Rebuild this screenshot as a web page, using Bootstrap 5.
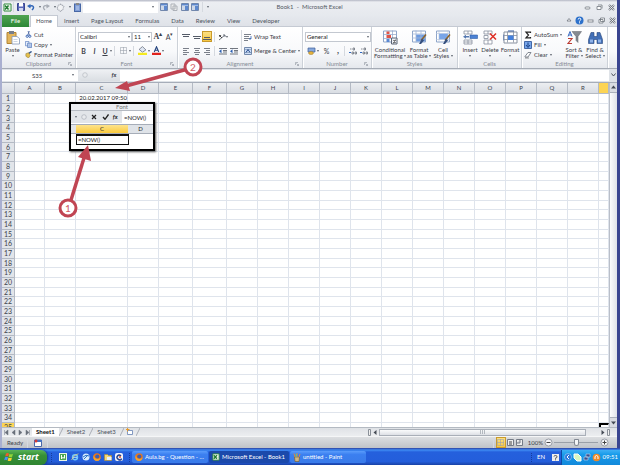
<!DOCTYPE html>
<html lang="en">
<head>
<meta charset="utf-8">
<meta name="viewport" content="width=device-width, initial-scale=1">
<title>Book1 - Microsoft Excel</title>
<link href="https://cdn.jsdelivr.net/npm/bootstrap@5.3.0/dist/css/bootstrap.min.css" rel="stylesheet">
<style>
body{font:6px/8px Lato,"Open Sans",sans-serif;color:#3c4048;background:#fff}
button,input,a{font:inherit;color:inherit}
button{background:none;border:0;padding:0}
a{text-decoration:none}
svg{display:block;flex:none}
.app{border-left:2px solid #a9afd0;border-right:3px solid #3a4590;min-height:0}
.titlebar{height:15px;background:linear-gradient(#b3b7c4 0,#eceef2 2px,#e6e9ee);padding-left:1px}
.titlebar button{height:11px}
.s3{width:3px}.s6{width:6px}.s8{width:8px}.s10{width:10px}.s11{width:11px}.s12{width:12px}.s15{width:15px}.s17{width:17px}.s20{width:20px}.s22{width:22px}.s26{width:26px}.s32{width:32px}.s40{width:40px}.s54{width:54px}
.t7{font-size:7px}.t8{font:8px "Liberation Serif",serif;font-weight:700}
.ib{display:flex;align-items:center;justify-content:center;flex:none;height:11px}
.title{color:#555b66}
.qbox{width:75px;height:10px;background:#fff}
.tabs{height:12px;background:linear-gradient(#e6e9ee,#dfe2e8);border-bottom:1px solid #c5cad3}
.rtab{height:12px;padding:2px 6px 0;color:#4c525c}
.rtab.file{width:27px;padding:2px 0 0;text-align:center;background:linear-gradient(#4fa352,#2c8736);color:#fff;margin-right:1px}
.rtab.on{background:#fff;border:1px solid #c5cad3;border-bottom:0;padding:1px 5px 0}
.ribbon{height:42px;background:linear-gradient(#fff,#f8f9fb 60%,#e5e8ed);border-bottom:1px solid #a5abb5}
.grp{border-right:1px solid #ccd1d8;display:flex;flex-direction:column;flex:none;box-shadow:1px 0 #fff}
.grp .body{height:34px;display:flex;padding:3px 0 0 2px}
.grp .cap{height:8px;color:#858b95;text-align:center;position:relative}
.grp .cap svg{position:absolute;right:3px;top:2px}
.g-clip{width:74px}.g-font{width:102px}.g-align{width:125px}.g-num{width:69px}.g-style{width:86px}.g-cells{width:64px}.g-edit{width:86px}
.line{display:flex;align-items:center;height:14px}
.vr1{width:1px;height:10px;background:#d5d9df;margin:0 2px;flex:none}
.tri{width:0;height:0;border:1px solid transparent;border-top:2px solid #5b616b;border-bottom:0;flex:none}
.big{display:flex;flex-direction:column;align-items:center;line-height:6px;white-space:nowrap;flex:none}
.big svg{margin-bottom:2px}
.big .tri{display:inline-block;margin:0 0 1px}
.big>.tri{margin-top:2px}
.sm{display:flex;align-items:center;gap:2px;height:10px;white-space:nowrap}
.fld{height:10px;border:1px solid #c3c8d0;background:#fff;padding:0 1px;display:flex;align-items:center;justify-content:space-between;color:#222}
.fld input{border:0;padding:0;width:100%;min-width:0;height:8px;background:none;outline:0}
.sel{background:linear-gradient(#fce38a,#f7c53c);outline:1px solid #c99a2c;outline-offset:-1px}
.fbar{height:14px;background:#dfe3e8;padding:1px 0 2px;border-bottom:1px solid #a6adb9}
.fbar input{border:0;background:#fff;height:11px;padding:0 2px;min-width:0;outline:0}
.namebox{width:76px;background:#fff;height:11px}
.fxarea{width:42px;background:linear-gradient(#eef0f3,#dadee3);border-radius:6px 0 0 6px;height:11px;padding:0 2px 0 4px}
.sheet{min-height:0;overflow:hidden}
.gridwrap{overflow:hidden;min-width:0}
.cells{table-layout:fixed;border-collapse:separate;border-spacing:0;width:607px;color:#222}
.cells th,.cells td{padding:0;line-height:8px;border-right:1px solid #dfe4ec;border-bottom:1px solid #dfe4ec;font-weight:400;white-space:nowrap}
.cells tr{height:10px}
.cells tbody tr:nth-child(3n){height:9px}
.cells th{background:#e2e5ea;border-color:#b4bac4;text-align:center;color:#3c424c}
.cells tbody th{font-size:7px}
.cells thead tr{height:11px}
.cells thead th{background:linear-gradient(#eceef1,#d9dde3)}
.cells thead th:last-child,.cells tbody tr:last-child th{background:#fcd454}
.cells td.val{text-align:right}
.cells td.cur{border-left:2px solid #000;border-top:2px solid #000}
.vs{width:8px;flex:none;background:#d9dce2;border-left:1px solid #b9bec8}
.vs .thumb{flex:1;margin:1px 0;background:linear-gradient(90deg,#fbfcfd,#dfe2e8);border:1px solid #a9afba;border-width:1px 0}
.sbtn{height:8px;width:100%;display:flex;align-items:center;justify-content:center}
.stabs{height:9px;flex:none;background:linear-gradient(#dfe2e6,#eceef0);border-top:1px solid #b4bac2;color:#4d535d}
.stab{height:8px;line-height:8px;padding:0 4px;white-space:nowrap}
.stab.on{background:#fff;color:#111;font-weight:700}
.hthumb{height:7px;background:linear-gradient(#fafbfc,#dde0e5);border:1px solid #a9afb8;flex:1}
.hs{width:249px;gap:1px}
.status{height:12px;flex:none;background:linear-gradient(#dcdee1,#bfc3c8);border-top:1px solid #f5f6f7;padding:0 5px}
.zoomer{appearance:none;width:44px;height:8px;background:linear-gradient(#9aa0a8,#9aa0a8) center/100% 1px no-repeat;margin:0 1px}
.zoomer::-webkit-slider-thumb{appearance:none;width:5px;height:7px;background:#f5f6f8;border:1px solid #838993;border-radius:1px 1px 3px 3px}
.task{height:17px;flex:none;background:linear-gradient(#2b3f9f 0,#3f8cf3 2px,#2560dd 4px,#245edb 80%,#1941a5);color:#fff;padding-top:1px}
.start{width:47px;height:15px;background:linear-gradient(#58b457,#379038 35%,#2f8531);border-radius:0 6px 6px 0;box-shadow:1px 0 2px #163b8c;font:italic 700 9px/12px "Open Sans",sans-serif;color:#fff}
.grip{width:2px;height:9px;border-left:1px dotted #163c9c}
.tb{height:12px;border-radius:2px;background:linear-gradient(#5a9cfb,#3b7ff0 30%,#3a7bea);padding:0 3px;gap:2px;white-space:nowrap;width:76px;margin-left:1px;color:#fff}
.tb.on{background:#1b49ab;width:80px}
.tray{width:59px;height:15px;background:linear-gradient(#3fb0f5,#189bea 30%,#1289db);border-left:1px solid #0f4aa5;gap:1px;padding:0 2px}
.inset{position:absolute;left:67px;top:102px;width:86px;height:49px;border:2px solid #000;background:#fff;box-shadow:1px 1px 2px #555;color:#222}
.inset .cut{height:7px;background:#eceef1;line-height:6px;text-align:center;padding-left:20px;border-bottom:1px solid #b5bac2;color:#777}
.inset .bar{height:12px;background:#e2e5e9}
.inset .bar input{width:31px;min-width:0;border:0;height:12px;background:#fff;padding:0 2px;outline:0}
.inset .hd{height:10px;border:solid #a6adb8;border-width:1px 0;margin-top:1px;line-height:8px;text-align:center}
.inset .gutter{width:5px;background:#e2e5e9;height:100%}
.inset .c{width:52px;background:linear-gradient(#fde38c,#fbca3d);height:100%}
.inset .d{flex:1;background:#dfe3e8;height:100%}
.inset .edit{width:53px;height:11px;border:1px solid #111;border-top-width:2px;line-height:8px;padding-left:1px}
.marks{position:absolute;left:0;top:0;pointer-events:none}
.marks text{font:10px Lato,sans-serif;fill:#d05a66;text-anchor:middle}
</style>
<script src="https://cdn.jsdelivr.net/npm/bootstrap@5.3.0/dist/js/bootstrap.bundle.min.js"></script>
</head>
<body class="vh-100 d-flex flex-column overflow-hidden">
<svg width="0" height="0" class="position-absolute" aria-hidden="true"><defs>
<symbol id="xl" viewBox="0 0 9 9"><path d="M1 1h7v7H1z" fill="#fff" stroke="#2f8a3b"/><path d="M5 3h3M5 5h3M5 7h3" stroke="#9bc9a0" stroke-width=".6"/><path d="M2 2.5l3.5 4M5.500 2.500L2 6.500" stroke="#1f7c2f" stroke-width="1.5"/></symbol>
<symbol id="save" viewBox="0 0 8 8"><path d="M.5.5h7v7h-7z" fill="#5867b8" stroke="#38458f"/><path d="M2 0h4v3.500H2z" fill="#fff"/><path d="M2 5h4v3H2z" fill="#cfd6ee"/></symbol>
<symbol id="undo" viewBox="0 0 8 8"><path d="M2 3.500C6 1.500 8 4 5 7" fill="none" stroke="#3166b8" stroke-width="1.500"/><path d="M0 3l3.500-2v4.500z" fill="#3166b8"/></symbol>
<symbol id="redo" viewBox="0 0 8 8"><path d="M6 3.500C2 1.500 0 4 3 7" fill="none" stroke="#a7acb5" stroke-width="1.300"/><path d="M8 3L4.500 1v4.500z" fill="#a7acb5"/></symbol>
<symbol id="shape" viewBox="0 0 8 8"><path d="M4 1L7 3 6 6 4 7.500 1 5 2 2z" fill="#f2f3f5" stroke="#a3a8b1" stroke-dasharray="1 .5"/></symbol>
<symbol id="clipb" viewBox="0 0 7 9"><rect x=".5" y="1" width="6" height="7.500" fill="#7f9dd6" stroke="#4767a5"/><path d="M2 0h3v2H2z" fill="#888"/><path d="M2 4h3M2 6h3" stroke="#dce6fa" stroke-width=".7"/></symbol>
<symbol id="panel" viewBox="0 0 8 8"><path d="M.5.5h7v7h-7z" fill="#e9eff9" stroke="#7187ad"/><path d="M1 1h6v1.500H1zM4 3h3v4H4z" fill="#5d88ce"/><path d="M1 4h3M1 6h3" stroke="#93a3bd" stroke-width=".6"/></symbol>
<symbol id="gcopy" viewBox="0 0 8 8"><path d="M1 1h4v5H1zM3 3h4v4.500H3z" fill="#eee" stroke="#adb1b8"/></symbol>
<symbol id="paste" viewBox="0 0 14 14"><path d="M1 2h9v11H1z" fill="#e3b55c" stroke="#b38434"/><path d="M3 .5h5v3H3z" fill="#777e8b"/><path d="M6 6h5l2.500 2v5.500H6z" fill="#fff" stroke="#8397b8" stroke-width=".8"/><path d="M7.500 9h4M7.500 11h4" stroke="#a8b8d2" stroke-width=".6"/></symbol>
<symbol id="cut" viewBox="0 0 8 8"><path d="M5 0L3 5M3.500 0L5 5" stroke="#536ea5" stroke-width="1"/><circle cx="2.500" cy="6" r="1.300" fill="none" stroke="#2c5aae"/><circle cx="5.500" cy="6" r="1.300" fill="none" stroke="#2c5aae"/></symbol>
<symbol id="copy" viewBox="0 0 8 8"><path d="M.5.500h4v5h-4z" fill="#e4edfb" stroke="#5b80c0" stroke-width=".8"/><path d="M3 2.500h4.500v5H3z" fill="#cdddf6" stroke="#4a70b5" stroke-width=".8"/><path d="M4 4.500h2.500M4 6h2.500" stroke="#4a70b5" stroke-width=".5"/></symbol>
<symbol id="brush" viewBox="0 0 8 8"><path d="M7.500 .5L4 3" stroke="#35588c" stroke-width="1.600"/><path d="M1 3l3-1 2 3-2 3-3-2z" fill="#e4c04d" stroke="#8f7430" stroke-width=".6"/></symbol>
<symbol id="al-t" viewBox="0 0 8 8"><path d="M0 1.500h8M1 3.500h6" stroke="#555c68"/></symbol>
<symbol id="al-m" viewBox="0 0 8 8"><path d="M0 3.500h8M1 5.500h6" stroke="#555c68"/></symbol>
<symbol id="al-b" viewBox="0 0 8 8"><path d="M1 4.500h6M0 6.500h8" stroke="#555c68"/></symbol>
<symbol id="h-l" viewBox="0 0 8 8"><path d="M1 1.500h6M1 3.500h4M1 5.500h6M1 7.500h4" stroke="#6b717c" stroke-width=".9"/></symbol>
<symbol id="h-c" viewBox="0 0 8 8"><path d="M1 1.500h6M2 3.500h4M1 5.500h6M2 7.500h4" stroke="#6b717c" stroke-width=".9"/></symbol>
<symbol id="h-r" viewBox="0 0 8 8"><path d="M1 1.500h6M3 3.500h4M1 5.500h6M3 7.500h4" stroke="#6b717c" stroke-width=".9"/></symbol>
<symbol id="ind" viewBox="0 0 8 8"><path d="M0 1.500h8M4 3.500h4M4 5h4M0 7h8" stroke="#4f555f" stroke-width=".8"/><path d="M0 4.200l2.500-2v4z" fill="#2b5fb0"/></symbol>
<symbol id="ori" viewBox="0 0 8 8"><path d="M1 7L7 2M5 2h2v2" stroke="#6e747e" fill="none"/><path d="M1 2l3 3M1.500 4l1.500-2" stroke="#444"/></symbol>
<symbol id="wrap" viewBox="0 0 8 8"><path d="M0 1.500h7M0 3.500h5M0 5.500h7M0 7.500h4" stroke="#6c737e" stroke-width=".9"/><path d="M7 3v3H5" stroke="#3268bc" fill="none" stroke-width=".8"/></symbol>
<symbol id="merge" viewBox="0 0 8 8"><path d="M.5.500h7v7h-7z" fill="#cfe0f8" stroke="#7389ab"/><path d="M.5 2.500h7M.5 5.500h7" stroke="#7389ab" stroke-width=".6"/><path d="M2 5.500l2-3 2 3" fill="none" stroke="#234a8d"/></symbol>
<symbol id="bord" viewBox="0 0 8 8"><path d="M.5.500h7v7h-7zM4 0v8M0 4h8" fill="none" stroke="#9da3ad" stroke-width=".7"/></symbol>
<symbol id="fillc" viewBox="0 0 8 8"><path d="M1 3l3-2.500 3 3L4 5.500z" fill="#dfe6f2" stroke="#58606e" stroke-width=".6"/><path d="M0 6h8v2H0z" fill="#f5ea1e"/></symbol>
<symbol id="fontc" viewBox="0 0 8 8"><path d="M2 5.300L4 .7l2 4.600M2.800 3.800h2.400" stroke="#26457f" fill="none"/><path d="M0 6h8v2H0z" fill="#e0231d"/></symbol>
<symbol id="money" viewBox="0 0 9 8"><path d="M1 1h7v4H1z" fill="#85a7dc" stroke="#3f5f98" stroke-width=".7"/><ellipse cx="4" cy="6" rx="2.500" ry="1.500" fill="#e7b53f" stroke="#9b7622" stroke-width=".5"/></symbol>
<symbol id="dec" viewBox="0 0 8 8"><path d="M1 2h1.500M4 1h1.500v2H4zM3 5h1.500v2H3zM6 5h1.500v2H6z" fill="none" stroke="#59606b" stroke-width=".7"/><path d="M0 5.500h2" stroke="#2f68c0"/></symbol>
<symbol id="cond" viewBox="0 0 15 14"><path d="M.5.500h13v11H.5z" fill="#fff" stroke="#8ea5c9"/><path d="M.5 4h13M.5 8h13M9.500 0v12" stroke="#8ea5c9" stroke-width=".7"/><path d="M3.500 1h3v2.500h-3z" fill="#de5549"/><path d="M3.500 4.500h4.500v3H3.500z" fill="#de5549"/><path d="M3.500 8.500h3v3h-3z" fill="#5a88d3"/><path d="M8.500 7.500h5.500v6H8.500z" fill="#eef1f6" stroke="#5b6474"/><path d="M10 10h3M10 12h3M12.500 9l-2 4" stroke="#444" stroke-width=".6"/></symbol>
<symbol id="tabl" viewBox="0 0 15 14"><path d="M.5.500h13v11H.5z" fill="#fff" stroke="#8ea5c9"/><path d="M4 4h9v7H4z" fill="#6d9be0"/><path d="M0 3.500h14M0 7.500h14M4 0v12M9 0v12" stroke="#a3b7d8" stroke-width=".8"/><path d="M14 4l-5 6" stroke="#8d6429" stroke-width="1.500"/><path d="M10 8l2 2-3 3.500H7z" fill="#37517f"/></symbol>
<symbol id="cst" viewBox="0 0 15 14"><path d="M.5.500h13v11H.5z" fill="#fff" stroke="#8ea5c9"/><path d="M3 3h9v6H3z" fill="#79a5e8"/><path d="M3 0v12M12 0v12M0 3h14M0 9h14" stroke="#b3c2db" stroke-width=".6"/><path d="M14 4l-5 6" stroke="#8d6429" stroke-width="1.500"/><path d="M10 8l2 2-3 3.500H7z" fill="#37517f"/></symbol>
<symbol id="ins" viewBox="0 0 15 14"><path d="M1 .5h8v3H1zM1 9.500h8v4H1zM5 .5v3M5 9.500v4M1 11.500h8" fill="#fff" stroke="#8891a0" stroke-width=".8"/><path d="M7 4.500h7.500v3.500H7z" fill="#4c82d4" stroke="#2f5ea7" stroke-width=".6"/><path d="M0 6.200l3-2v1.300h3v1.500H3v1.300z" fill="#5579b1"/></symbol>
<symbol id="del" viewBox="0 0 15 14"><path d="M1 .5h8v3H1zM1 9.500h8v4H1zM5 .5v3M5 9.500v4M1 5h4v3H1z" fill="#fff" stroke="#8891a0" stroke-width=".8"/><path d="M7 3l6 6M13 3L7 9" stroke="#de3026" stroke-width="1.500"/></symbol>
<symbol id="fmt" viewBox="0 0 15 14"><path d="M1 1.500h13v11H1z" fill="#fff" stroke="#8891a0"/><path d="M1 5h13M1 9h13M4.500 1v11M10.500 1v11" stroke="#8891a0" stroke-width=".8"/><path d="M5 5h5.500v4.500H5z" fill="#4480dc"/><path d="M5 .5h6M0 4v6" stroke="#33589a"/></symbol>
<symbol id="filld" viewBox="0 0 8 8"><path d="M.5.500h7v7h-7z" fill="#78a6ea" stroke="#4368a7"/><path d="M4 1.500v4M2 4l2 2.500L6 4" stroke="#173f85" fill="none"/></symbol>
<symbol id="eras" viewBox="0 0 8 8"><path d="M1 5.500l3-4h3l-3 4.500H1z" fill="#fff" stroke="#666d79" stroke-width=".8"/><path d="M1 7h4" stroke="#555" stroke-width=".6"/></symbol>
<symbol id="sort" viewBox="0 0 15 14"><path d="M1 6L3 1l2 5M1.700 4.500h2.600" fill="none" stroke="#3568c0"/><path d="M1 8h4l-4 5h4" fill="none" stroke="#bb3b33" stroke-width="1.200"/><path d="M5 1h9.500L11 6v6L9 10V6z" fill="#858a92" stroke="#5e636b" stroke-width=".5"/></symbol>
<symbol id="find" viewBox="0 0 15 14"><path d="M3 2h3v4h3V2h3l2.500 7v4H9V9H6v4H.5V9z" fill="#426fb6" stroke="#26447b" stroke-width=".6"/><path d="M2 9h3v3H2zM10 9h3v3h-3z" fill="#8fb2e8"/></symbol>
<symbol id="launch" viewBox="0 0 4 4"><path d="M.5 3V.5H3M1.500 1.500l2 2M3.500 2v1.500H2" fill="none" stroke="#8d939d" stroke-width=".6"/></symbol>
<symbol id="flag" viewBox="0 0 10 10"><path d="M2 1.500q1.500-1 3 0l-.8 3q-1.500-1-3 0z" fill="#f25c2c"/><path d="M5.500 1.800q1.500 1 3.500 0l-.8 3q-2 1-3.500 0z" fill="#8fd63a"/><path d="M1 5.200q1.500-1 3 0l-.8 3q-1.500-1-3 0z" fill="#4a8ef5"/><path d="M4.500 5.500q1.500 1 3.500 0l-.8 3q-2 1-3.500 0z" fill="#fbd02c"/></symbol>
<symbol id="fox" viewBox="0 0 8 8"><circle cx="4" cy="4" r="3.700" fill="#e9761c"/><circle cx="4.300" cy="3.500" r="2.100" fill="#3e5fae"/><path d="M1 2q0 4 4 4 2 0 2.500-2 0 4-3.500 4T.3 4z" fill="#f5a32c"/></symbol>
<symbol id="mu" viewBox="0 0 8 8"><path d="M0 0h8v8H0z" fill="#e9f5e5"/><path d="M1 1h6v6H1z" fill="#4ca551"/><path d="M2.500 2v4M2.500 4.500q1.500 1 3 0M5.500 2v3.500" stroke="#fff" fill="none"/></symbol>
<symbol id="ie" viewBox="0 0 8 8"><circle cx="4" cy="4.300" r="2.500" fill="none" stroke="#74c8fb" stroke-width="1.400"/><path d="M2 4.300h4" stroke="#b4e4ff"/><path d="M.5 7Q3 1 7.500.8" stroke="#f6d872" fill="none" stroke-width=".7"/></symbol>
<symbol id="globe" viewBox="0 0 8 8"><circle cx="4" cy="4" r="3.500" fill="#d9ecfc"/><path d="M1 4q3-3 6-1M2 6l4-4" stroke="#2c73c9" fill="none"/></symbol>
<symbol id="fold" viewBox="0 0 8 8"><path d="M.5 1.500h3l1 1h3v5h-7z" fill="#f4d777" stroke="#b18c2e" stroke-width=".6"/><path d="M3 4h4.500v3H3z" fill="#e9f1fb"/></symbol>
<symbol id="cc" viewBox="0 0 8 8"><rect width="8" height="8" rx="2" fill="#f2f4fa"/><path d="M6 3Q4 1 2.500 3t1 3.500 3-1" fill="none" stroke="#25418e" stroke-width="1.500"/><circle cx="5" cy="4" r="1" fill="#df572d"/></symbol>
<symbol id="pnt" viewBox="0 0 8 9"><path d="M1.500 4h5L6 8.500H2z" fill="#cfb685" stroke="#75592b" stroke-width=".6"/><path d="M2 4L1 .5M4 4V0M6 4l1-3" stroke="#e4853a"/><path d="M3 4l.3-3" stroke="#70d26a"/></symbol>
<symbol id="newsh" viewBox="0 0 8 8"><path d="M1.500 2.500h5v4h-5z" fill="#fff" stroke="#6682b4" stroke-width=".8"/><path d="M0 1.500h3.500M1.500 0v3.500" stroke="#e59a2d"/></symbol>
<symbol id="slant" viewBox="0 0 4 8"><path d="M0 8L4 0" stroke="#9aa0aa" stroke-width=".8"/></symbol>
</defs></svg>

<div class="app position-relative flex-grow-1 d-flex flex-column">
  <header class="titlebar d-flex align-items-center position-relative">
    <button class="ib s8" aria-label="Excel"><svg width="9" height="9"><use href="#xl"/></svg></button>
    <span class="vr1"></span>
    <button class="ib s10" aria-label="Save"><svg width="8" height="8"><use href="#save"/></svg></button>
    <button class="ib s15" aria-label="Undo"><svg width="8" height="8"><use href="#undo"/></svg><i class="tri ms-1"></i></button>
    <button class="ib s15" aria-label="Redo"><svg width="8" height="8"><use href="#redo"/></svg><i class="tri ms-1"></i></button>
    <button class="ib s15" aria-label="Shapes"><svg width="9" height="9"><use href="#shape"/></svg><i class="tri ms-1"></i></button>
    <button class="ib s12" aria-label="Paste special"><svg width="7" height="9"><use href="#clipb"/></svg></button>
    <button class="qbox d-flex align-items-center justify-content-end pe-1" aria-label="Quick style"><i class="tri"></i></button>
    <button class="ib s11" aria-label="View"><svg width="8" height="8"><use href="#panel"/></svg></button>
    <button class="ib s10" aria-label="Copy pages"><svg width="8" height="8"><use href="#gcopy"/></svg></button>
    <button class="ib s11" aria-label="Form"><svg width="8" height="8"><use href="#panel"/></svg></button>
    <button class="ib s10" aria-label="Window list"><svg width="8" height="8"><use href="#panel"/></svg></button>
    <span class="vr1"></span>
    <button class="ib s6" aria-label="Customize"><i class="tri"></i></button>
    <span class="title position-absolute start-50 translate-middle-x text-nowrap">Book1 &nbsp;-&nbsp; Microsoft Excel</span>
    <span class="d-flex ms-auto">
      <button class="ib s12" aria-label="Minimize"><svg width="7" height="7"><rect x="1" y="3" width="5" height="2" rx="1" fill="#fff" stroke="#70767f" stroke-width=".8"/></svg></button>
      <button class="ib s12" aria-label="Restore"><svg width="7" height="7"><path d="M1 2.500h4v3H1zM2 1h4v3.500" fill="#fff" stroke="#70767f" stroke-width=".8"/></svg></button>
      <button class="ib s12" aria-label="Close"><svg width="7" height="7"><path d="M1 1l5 5M6 1L1 6" stroke="#70767f" stroke-width="2"/><path d="M1 1l5 5M6 1L1 6" stroke="#fff" stroke-width=".7"/></svg></button>
    </span>
  </header>
  <nav class="tabs d-flex">
    <a class="rtab file" href="#">File</a><a class="rtab on" href="#">Home</a><a class="rtab" href="#">Insert</a><a class="rtab" href="#">Page Layout</a><a class="rtab" href="#">Formulas</a><a class="rtab" href="#">Data</a><a class="rtab" href="#">Review</a><a class="rtab" href="#">View</a><a class="rtab" href="#">Developer</a>
    <span class="d-flex ms-auto">
      <button class="ib s8" aria-label="Collapse ribbon"><svg width="6" height="6"><path d="M1 4l2-2.500L5 4z" fill="#fff" stroke="#6c727c" stroke-width=".8"/></svg></button>
      <button class="ib s12" aria-label="Help"><svg width="9" height="9"><circle cx="4.500" cy="4.500" r="4" fill="#2d71cb"/><path d="M3.200 3.500q0-1.300 1.300-1.300t1.300 1.100T4.500 5v.5M4.500 6.300v1" fill="none" stroke="#fff"/></svg></button>
      <button class="ib s11" aria-label="Minimize workbook"><svg width="7" height="7"><rect x="1" y="3" width="5" height="2" fill="#fff" stroke="#70767f" stroke-width=".8"/></svg></button>
      <button class="ib s11" aria-label="Restore workbook"><svg width="7" height="7"><path d="M2.500 1h4v3.500h-4zM1 2.500h4V6H1z" fill="#fff" stroke="#70767f" stroke-width=".8"/></svg></button>
      <button class="ib s10" aria-label="Close workbook"><svg width="7" height="7"><path d="M1 1l5 5M6 1L1 6" stroke="#70767f" stroke-width="2"/><path d="M1 1l5 5M6 1L1 6" stroke="#fff" stroke-width=".7"/></svg></button>
    </span>
  </nav>
  <section class="ribbon d-flex" aria-label="Ribbon">
    <div class="grp g-clip"><div class="body gap-1">
      <button class="big s17"><svg width="14" height="15"><use href="#paste"/></svg>Paste<i class="tri"></i></button>
      <div><button class="sm"><svg width="7" height="7"><use href="#cut"/></svg>Cut</button><button class="sm"><svg width="7" height="7"><use href="#copy"/></svg>Copy <i class="tri"></i></button><button class="sm"><svg width="7" height="7"><use href="#brush"/></svg>Format Painter</button></div>
    </div><div class="cap">Clipboard<svg width="4" height="4"><use href="#launch"/></svg></div></div>
    <div class="grp g-font"><div class="body d-block">
      <div class="line"><label class="fld s54"><input aria-label="Font" value="Calibri"><i class="tri"></i></label><label class="fld s20"><input aria-label="Font size" value="11"><i class="tri"></i></label><button class="ib s12 t8">A<sup>▴</sup></button><button class="ib s11 t7">A<sup>▾</sup></button></div>
      <div class="line t7"><button class="ib s11"><b>B</b></button><button class="ib s11"><i><b>I</b></i></button><button class="ib s10"><b><u>U</u></b></button><i class="tri"></i><span class="vr1"></span><button class="ib s12" aria-label="Borders"><svg width="7" height="7"><use href="#bord"/></svg></button><i class="tri"></i><span class="vr1"></span><button class="ib s12" aria-label="Fill color"><svg width="9" height="9"><use href="#fillc"/></svg></button><i class="tri"></i><button class="ib s12" aria-label="Font color"><svg width="9" height="9"><use href="#fontc"/></svg></button><i class="tri"></i></div>
    </div><div class="cap">Font<svg width="4" height="4"><use href="#launch"/></svg></div></div>
    <div class="grp g-align"><div class="body">
      <div><div class="line"><button class="ib s11" aria-label="Top"><svg width="8" height="8"><use href="#al-t"/></svg></button><button class="ib s11" aria-label="Middle"><svg width="8" height="8"><use href="#al-m"/></svg></button><button class="ib s10 sel" aria-label="Bottom"><svg width="8" height="8"><use href="#al-b"/></svg></button><span class="vr1"></span><button class="ib s12" aria-label="Orientation"><svg width="8" height="8"><use href="#ori"/></svg><i class="tri"></i></button></div>
      <div class="line"><button class="ib s11" aria-label="Left"><svg width="8" height="8"><use href="#h-l"/></svg></button><button class="ib s11" aria-label="Center"><svg width="8" height="8"><use href="#h-c"/></svg></button><button class="ib s10" aria-label="Right"><svg width="8" height="8"><use href="#h-r"/></svg></button><span class="vr1"></span><button class="ib s11" aria-label="Decrease indent"><svg width="8" height="8"><use href="#ind"/></svg></button><button class="ib s11" aria-label="Increase indent"><svg width="8" height="8"><use href="#ind"/></svg></button></div></div>
      <span class="vr1 h-75"></span>
      <div><div class="line"><button class="sm"><svg width="8" height="8"><use href="#wrap"/></svg>Wrap Text</button></div><div class="line"><button class="sm"><svg width="8" height="8"><use href="#merge"/></svg>Merge &amp; Center <i class="tri"></i></button></div></div>
    </div><div class="cap">Alignment<svg width="4" height="4"><use href="#launch"/></svg></div></div>
    <div class="grp g-num"><div class="body d-block">
      <div class="line"><label class="fld flex-grow-1"><input aria-label="Number format" value="General"><i class="tri"></i></label></div>
      <div class="line"><button class="ib s12" aria-label="Currency"><svg width="9" height="8"><use href="#money"/></svg></button><i class="tri"></i><button class="ib s15 t7">%</button><button class="ib s8 t8">,</button><span class="vr1"></span><button class="ib s11" aria-label="More decimals"><svg width="8" height="8"><use href="#dec"/></svg></button><button class="ib s11" aria-label="Fewer decimals"><svg width="8" height="8"><use href="#dec"/></svg></button></div>
    </div><div class="cap">Number<svg width="4" height="4"><use href="#launch"/></svg></div></div>
    <div class="grp g-style"><div class="body">
      <button class="big s32"><svg width="15" height="15"><use href="#cond"/></svg><span>Conditional</span><span>Formatting <i class="tri"></i></span></button>
      <button class="big s26"><svg width="15" height="15"><use href="#tabl"/></svg><span>Format</span><span>as Table <i class="tri"></i></span></button>
      <button class="big s22"><svg width="15" height="15"><use href="#cst"/></svg><span>Cell</span><span>Styles <i class="tri"></i></span></button>
    </div><div class="cap">Styles</div></div>
    <div class="grp g-cells"><div class="body">
      <button class="big s20"><svg width="15" height="15"><use href="#ins"/></svg><span>Insert</span><i class="tri"></i></button>
      <button class="big s20"><svg width="15" height="15"><use href="#del"/></svg><span>Delete</span><i class="tri"></i></button>
      <button class="big s20"><svg width="15" height="15"><use href="#fmt"/></svg><span>Format</span><i class="tri"></i></button>
    </div><div class="cap">Cells</div></div>
    <div class="grp g-edit"><div class="body">
      <div class="s40"><button class="sm"><svg width="8" height="8"><path d="M6.500 2V1.200H2L4.500 4 2 6.800h4.500V6" fill="none" stroke="#222" stroke-width="1.200"/></svg>AutoSum <i class="tri"></i></button><button class="sm"><svg width="8" height="8"><use href="#filld"/></svg>Fill <i class="tri"></i></button><button class="sm"><svg width="8" height="8"><use href="#eras"/></svg>Clear <i class="tri"></i></button></div>
      <button class="big s20"><svg width="15" height="15"><use href="#sort"/></svg><span>Sort &amp;</span><span>Filter <i class="tri"></i></span></button>
      <button class="big s22"><svg width="15" height="15"><use href="#find"/></svg><span>Find &amp;</span><span>Select <i class="tri"></i></span></button>
    </div><div class="cap">Editing</div></div>
  </section>
  <section class="fbar d-flex">
    <div class="namebox d-flex align-items-center pe-1"><input class="w-100 text-center" aria-label="Name box" value="S35"><i class="tri"></i></div>
    <div class="fxarea d-flex align-items-center justify-content-between"><svg width="6" height="6"><circle cx="3" cy="3" r="2.300" fill="#e9ebee" stroke="#b6bac1" stroke-width=".7"/></svg><button class="ib s8"><b><i>fx</i></b></button></div>
    <input class="flex-grow-1" aria-label="Formula bar">
    <button class="ib s8" aria-label="Expand formula bar"><svg width="5" height="4"><path d="M.5.500l2 2.500 2-2.500" fill="none" stroke="#4d535d"/></svg></button>
  </section>
  <main class="sheet d-flex flex-grow-1">
    <div class="gridwrap flex-grow-1"><table class="cells" id="cells"></table></div>
    <div class="vs d-flex flex-column"><button class="sbtn" aria-label="Scroll up"><svg width="5" height="4"><path d="M0 3.500h5L2.500.5z" fill="#454b55"/></svg></button><div class="thumb"></div><button class="sbtn" aria-label="Scroll down"><svg width="5" height="4"><path d="M0 .5h5L2.500 3.500z" fill="#454b55"/></svg></button></div>
  </main>
  <div class="stabs d-flex align-items-center">
    <svg width="30" height="7" viewBox="0 0 30 7"><path d="M2.500 1v5M6 1v5L3 3.500zM13 1v5l-3-2.500zM17 1v5l3-2.500zM24 1v5l3-2.500zM27.500 1v5" fill="#6a707b" stroke="#6a707b" stroke-width=".5"/></svg>
    <a class="stab on" href="#">Sheet1</a><svg width="4" height="8"><use href="#slant"/></svg><a class="stab" href="#">Sheet2</a><svg width="4" height="8"><use href="#slant"/></svg><a class="stab" href="#">Sheet3</a><svg width="4" height="8"><use href="#slant"/></svg>
    <button class="ib s12" aria-label="New sheet"><svg width="8" height="8"><use href="#newsh"/></svg></button><svg width="4" height="8"><use href="#slant"/></svg>
    <div class="hs d-flex align-items-center ms-auto"><svg width="3" height="7"><path d="M.5.500h2v6h-2z" fill="#eee" stroke="#8a9099"/></svg><button class="ib s6" aria-label="Scroll left"><svg width="4" height="5"><path d="M3.500 0v5L.5 2.500z" fill="#454b55"/></svg></button><div class="hthumb d-flex justify-content-center align-items-center"><svg width="5" height="4"><path d="M.5 0v4M2.500 0v4M4.500 0v4" stroke="#9aa0a9" stroke-width=".7"/></svg></div><span class="s12"></span><button class="ib s6" aria-label="Scroll right"><svg width="4" height="5"><path d="M.5 0v5l3-2.500z" fill="#454b55"/></svg></button><svg width="3" height="7"><path d="M.5.500h2v6h-2z" fill="#eee" stroke="#8a9099"/></svg><span class="s6"></span></div>
  </div>
  <footer class="status d-flex align-items-center"><span>Ready</span><span class="vr1 ms-1"></span><button class="ib s15" aria-label="Record macro"><svg width="8" height="8"><path d="M.5 1h7v6.500h-7z" fill="#fff" stroke="#4a68a8"/><path d="M0 1h8v2H0z" fill="#4472c1"/><circle cx="2" cy="2" r="1.500" fill="#d43b36"/></svg></button><span class="vr1"></span>
    <span class="d-flex align-items-center ms-auto"><span class="vr1"></span><button class="ib s10 sel" aria-label="Normal view"><svg width="7" height="7"><use href="#bord"/></svg></button><button class="ib s10" aria-label="Page layout view"><svg width="7" height="7"><path d="M.5.500h6v6h-6z" fill="#eee" stroke="#747b86"/><path d="M2 2h3v4H2z" fill="#999"/></svg></button><button class="ib s8" aria-label="Page break view"><svg width="7" height="7"><path d="M.5.500h6v6h-6zM.5 4h3.500V.5" fill="#eee" stroke="#747b86"/></svg></button><span class="ps-1">100%</span>
    <button class="ib s10" aria-label="Zoom out"><svg width="9" height="9"><circle cx="4.500" cy="4.500" r="3.500" fill="#f5f6f8" stroke="#868c96" stroke-width=".8"/><path d="M2.500 4.500h4" stroke="#444"/></svg></button><input class="zoomer" type="range" aria-label="Zoom" value="50"><button class="ib s10" aria-label="Zoom in"><svg width="9" height="9"><circle cx="4.500" cy="4.500" r="3.500" fill="#f5f6f8" stroke="#868c96" stroke-width=".8"/><path d="M2.500 4.500h4M4.500 2.500v4" stroke="#444"/></svg></button><span class="s3"></span></span>
  </footer>

  <div class="inset">
    <div class="cut">Font</div>
    <div class="bar d-flex align-items-center justify-content-between"><i class="tri ms-1"></i><svg width="6" height="6"><circle cx="3" cy="3" r="2.300" fill="#e9ebee" stroke="#aaafb8" stroke-width=".7"/></svg><svg width="6" height="6"><path d="M1 1l4 4M5 1L1 5" stroke="#222" stroke-width="1.200"/></svg><svg width="7" height="6"><path d="M1 3l2 2.300L6.500.500" fill="none" stroke="#222" stroke-width="1.300"/></svg><b><i>fx</i></b><input aria-label="Formula" value="=NOW()"></div>
    <div class="hd d-flex"><span class="gutter"></span><span class="c">C</span><span class="d">D</span></div>
    <div class="d-flex"><span class="gutter bg-white"></span><div class="edit">=NOW()</div></div>
  </div>
  <svg class="marks" width="220" height="225" viewBox="2 0 220 225">
    <path d="M186 69.500L126 86" stroke="#c04553" stroke-width="3.500"/><path d="M115 88l12-7 3 10z" fill="#c04553"/>
    <circle cx="193" cy="67" r="8" fill="#fff" stroke="#c04553" stroke-width="3"/><text x="193" y="71">2</text>
    <path d="M71 200l13-42" stroke="#c04553" stroke-width="3.500"/><path d="M88 145l3 16-13-4z" fill="#c04553"/>
    <circle cx="68" cy="208" r="8" fill="#fff" stroke="#c04553" stroke-width="3"/><text x="68" y="212">1</text>
  </svg>
</div>
<div class="task d-flex align-items-center">
  <button class="start d-flex align-items-center ps-1"><svg width="10" height="10"><use href="#flag"/></svg><span class="ps-1">start</span></button>
  <span class="grip ms-1"></span>
  <button class="ib s12 ms-1" aria-label="uTorrent"><svg width="8" height="8"><use href="#mu"/></svg></button><button class="ib s11" aria-label="Internet Explorer"><svg width="8" height="8"><use href="#ie"/></svg></button><button class="ib s11" aria-label="Browser"><svg width="8" height="8"><use href="#globe"/></svg></button><button class="ib s11" aria-label="Firefox"><svg width="8" height="8"><use href="#fox"/></svg></button><button class="ib s11" aria-label="Folder"><svg width="8" height="8"><use href="#fold"/></svg></button><button class="ib s12" aria-label="CCleaner"><svg width="8" height="8"><use href="#cc"/></svg></button>
  <span class="grip ms-1"></span>
  <button class="tb d-flex align-items-center"><svg width="8" height="8"><use href="#fox"/></svg>Aula.bg - Question - ...</button>
  <button class="tb on d-flex align-items-center"><svg width="8" height="8"><use href="#xl"/></svg>Microsoft Excel - Book1</button>
  <button class="tb d-flex align-items-center"><svg width="8" height="9"><use href="#pnt"/></svg>untitled - Paint</button>
  <span class="grip ms-auto"></span><span class="px-1">EN</span><button class="ib s12" aria-label="Language help"><svg width="7" height="7"><path d="M0 0h7v7H0z" fill="#eee"/><path d="M2 2.500q0-1 1.500-1T5 2.800 3.500 4v.7M3.500 5.300v1" stroke="#333" fill="none" stroke-width=".8"/></svg></button>
  <div class="tray d-flex align-items-center"><svg width="8" height="8"><circle cx="4" cy="4" r="3.500" fill="#2a78dc" stroke="#a8d6fb" stroke-width=".6"/><path d="M5 2L3 4l2 2" stroke="#fff" fill="none"/></svg><svg width="9" height="9"><path d="M1 1h4l3 3v4H4L1 5z" fill="#d9f7c0" stroke="#fff"/></svg><svg width="8" height="8"><path d="M3 1h4v3H3zM1 4h4v3H1z" fill="#34508f" stroke="#c9d6ee" stroke-width=".6"/></svg><svg width="9" height="9"><circle cx="4.500" cy="4.500" r="3.800" fill="#ef8a26"/><path d="M3 6V3.500q1.500-2 3 0V6" stroke="#fff" fill="none"/></svg><span class="ms-auto">09:51</span></div>
</div>
<script>
  const widths = [13, 30, 31, 52, 31, 34, 34, ...Array(12).fill(31), 10];
  const names = "ABCDEFGHIJKLMNOPQR".split("").concat("");
  let html = "<colgroup>" + widths.map(w => `<col style="width:${w}px">`).join("") + "</colgroup><thead><tr><th></th>" +
    names.map(n => `<th scope="col">${n}</th>`).join("") + "</tr></thead><tbody>";
  for (let r = 1; r <= 35; r++) {
    html += `<tr><th scope="row">${r}</th>` + names.map((n, c) =>
      r === 1 && n === "C" ? '<td class="val">20.02.2017 09:50</td>' : r === 35 && c === 18 ? '<td class="cur"></td>' : "<td></td>").join("") + "</tr>";
  }
  document.getElementById("cells").innerHTML = html + "</tbody>";
</script>
</body>
</html>
